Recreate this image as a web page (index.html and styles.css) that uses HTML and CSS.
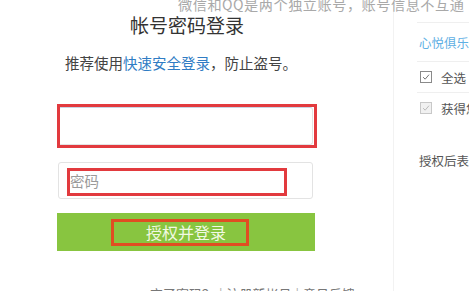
FILE: index.html
```html
<!DOCTYPE html>
<html lang="zh-CN">
<head>
<meta charset="utf-8">
<link rel="stylesheet" href="styles.css">
</head>
<body>
<div class="page">
  <div class="main">
    <div class="notice">微信和QQ是两个独立账号，账号信息不互通</div>
    <div class="form">
      <div class="title">帐号密码登录</div>
      <div class="subtitle">推荐使用<a class="link">快速安全登录</a>，防止盗号。</div>
      <div class="field field-user">
        <div class="input"></div>
        <div class="mark mark-user"></div>
      </div>
      <div class="field field-pass">
        <div class="input"><span class="placeholder">密码</span></div>
        <div class="mark mark-pass"></div>
      </div>
      <div class="field field-btn">
        <div class="button">授权并登录</div>
        <div class="mark mark-btn"></div>
      </div>
    </div>
    <div class="bottom-links">忘了密码？<span class="sep">|</span>注册新帐号<span class="sep">|</span>意见反馈</div>
  </div>
  <div class="side">
    <div class="row row-app"><span class="app">心悦俱乐部</span></div>
    <div class="row"><span class="cb"><svg viewBox="0 0 12 12" width="12" height="12"><path d="M2.5 6.2 L5 8.6 L9.6 3.2" fill="none" stroke="#666" stroke-width="1.1"/></svg></span><span class="lbl">全选</span></div>
    <div class="row"><span class="cb cb-dis"><svg viewBox="0 0 12 12" width="12" height="12"><path d="M2.5 6.2 L5 8.6 L9.6 3.2" fill="none" stroke="#b5b5b5" stroke-width="1.1"/></svg></span><span class="lbl">获得您的昵称、头像</span></div>
    <div class="auth">授权后表明你已同意</div>
  </div>
</div>
</body>
</html>
```

FILE: styles.css
```css
html, body {
  margin: 0;
  padding: 0;
  background: #fff;
}
body {
  width: 469px;
  height: 291px;
  overflow: hidden;
  font-family: "Noto Sans CJK SC", "Noto Sans", sans-serif;
}
.page {
  display: flex;
  width: 469px;
  height: 291px;
}
.main {
  width: 393px;
  flex: none;
  border-right: 1px solid #f2f2f2;
  position: relative;
}
.notice {
  margin-top: -3px;
  padding-left: 178px;
  font-size: 14.2px;
  letter-spacing: 0.5px;
  line-height: 14px;
  color: #a9a9a9;
  white-space: nowrap;
}
.form {
  margin-left: 57px;
  width: 260px;
}
.title {
  margin-top: 2px;
  padding-left: 73px;
  font-size: 19px;
  line-height: 24px;
  color: #333;
}
.subtitle {
  margin-top: 16px;
  padding-left: 8px;
  font-size: 14.5px;
  line-height: 20px;
  color: #444;
  white-space: nowrap;
}
.link {
  color: #2f7cc4;
}
.field {
  position: relative;
  margin-left: 1px;
}
.field-user {
  margin-top: 34px;
}
.field-pass {
  margin-top: 17px;
}
.field-btn {
  margin-top: 14px;
  margin-left: 0;
}
.input {
  box-sizing: border-box;
  width: 255px;
  height: 38px;
  border: 1px solid #e3e3e3;
  border-top-color: #c9d4e4;
  border-radius: 3px;
  background: #fff;
}
.field-pass .input {
  height: 37px;
  border-top-color: #e3e3e3;
  display: flex;
  align-items: center;
  padding-left: 11px;
}
.placeholder {
  font-size: 14.5px;
  color: #9a9a9a;
  line-height: 20px;
}
.button {
  width: 258px;
  height: 38px;
  background: #88c540;
  color: #f2f9e4;
  font-size: 16px;
  line-height: 38px;
  text-align: center;
}
.mark {
  position: absolute;
  box-sizing: border-box;
  border: 3px solid #e23a3e;
}
.mark-user {
  left: -1px;
  top: -3px;
  width: 260px;
  height: 44px;
}
.mark-pass {
  left: 9px;
  top: 6px;
  width: 220px;
  height: 28px;
}
.mark-btn {
  left: 54px;
  top: 6px;
  width: 138px;
  height: 27px;
  border-color: #e04d22;
}
.bottom-links {
  position: absolute;
  left: 150px;
  top: 286px;
  font-size: 13px;
  line-height: 16px;
  color: #777;
  white-space: nowrap;
}
.sep {
  margin: 0 4px;
  color: #aaa;
}
.side {
  flex: 1;
  padding-left: 23px;
  padding-top: 22px;
  overflow: hidden;
  white-space: nowrap;
}
.row {
  display: flex;
  align-items: center;
  height: 30px;
  border-top: 1px solid #efefef;
  font-size: 12.5px;
  color: #555;
}
.row-app {
  height: 38px;
}
.app {
  color: #5fb0e4;
  padding-left: 2px;
  font-size: 12.5px;
}
.cb {
  box-sizing: border-box;
  width: 12px;
  height: 12px;
  border: 1px solid #8a8a8a;
  margin-left: 3px;
  display: flex;
  align-items: center;
  justify-content: center;
  background: #fff;
}
.cb svg {
  display: block;
}
.cb-dis {
  border-color: #c8c8c8;
  background: #f1f1f1;
}
.lbl {
  margin-left: 9px;
}
.auth {
  margin-top: 30px;
  padding-left: 2px;
  font-size: 12.5px;
  line-height: 16px;
  color: #555;
}
```
